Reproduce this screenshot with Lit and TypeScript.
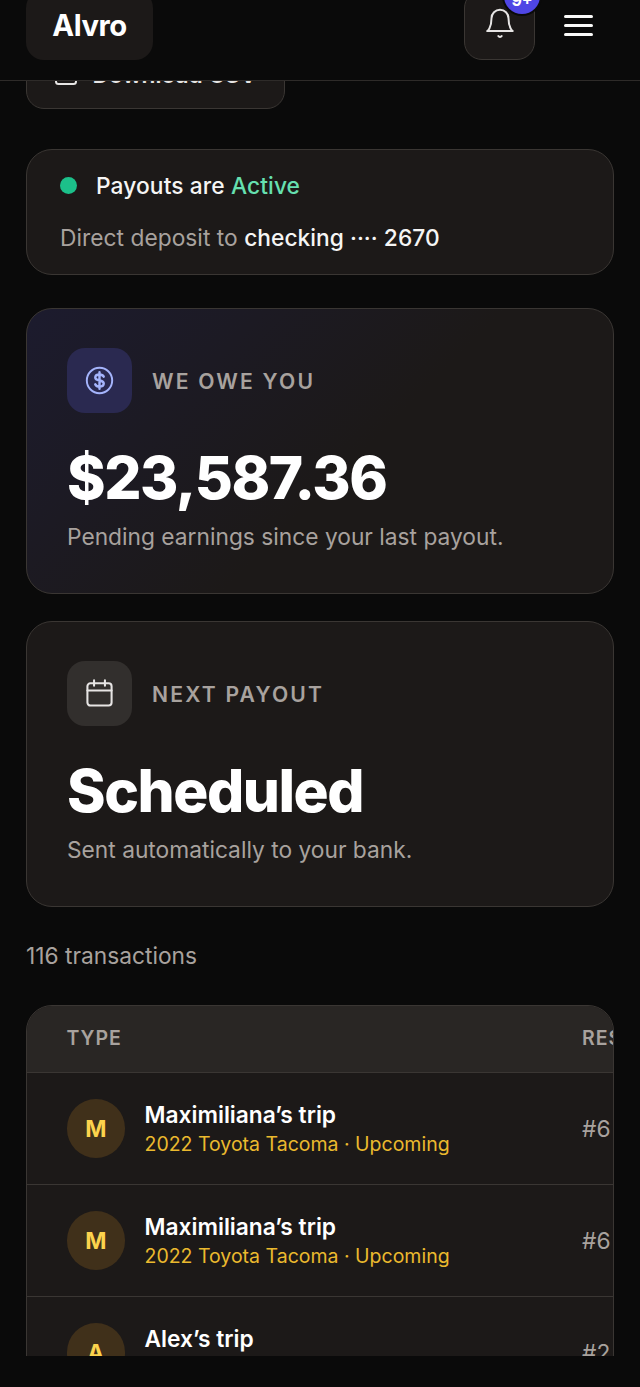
import { LitElement, html, css } from "lit";
import { customElement } from "lit/decorators.js";

interface Row {
  initial: string;
  name: string;
  sub: string;
  res: string;
}

const rows: Row[] = [
  { initial: "M", name: "Maximiliana’s trip", sub: "2022 Toyota Tacoma · Upcoming", res: "#6" },
  { initial: "M", name: "Maximiliana’s trip", sub: "2022 Toyota Tacoma · Upcoming", res: "#6" },
  { initial: "A", name: "Alex’s trip", sub: "2022 Toyota Tacoma · Upcoming", res: "#2" },
];

@customElement("app-root")
export class AppRoot extends LitElement {
  static styles = css`
    :host {
      display: block;
      width: 640px;
      height: 1387px;
      overflow: hidden;
      background: #0a0a0a;
      font-family: Inter, "Liberation Sans", sans-serif;
      color: #fafaf9;
    }
    * {
      box-sizing: border-box;
    }
    .header {
      display: flex;
      align-items: flex-start;
      justify-content: space-between;
      height: 91px;
      margin-top: -10px;
      padding: 0 47px 0 26px;
      border-bottom: 1px solid #2e2b29;
    }
    .logo {
      display: flex;
      align-items: center;
      justify-content: center;
      width: 127px;
      height: 70px;
      border-radius: 18px;
      background: #1c1918;
      font-size: 29.25px;
      font-weight: 700;
      letter-spacing: -0.45px;
      color: #fff;
    }
    .actions {
      display: flex;
      align-items: flex-start;
      gap: 29px;
    }
    .bell {
      position: relative;
      display: flex;
      align-items: center;
      justify-content: center;
      width: 71px;
      height: 70px;
      border-radius: 18px;
      border: 1.5px solid #3a3633;
      background: #1c1918;
      color: #e7e5e4;
    }
    .bell svg {
      display: block;
      width: 34px;
      height: 34px;
      margin-top: -2px;
    }
    .badge {
      position: absolute;
      top: -13px;
      left: 39px;
      display: flex;
      align-items: center;
      justify-content: center;
      width: 36px;
      height: 36px;
      padding-top: 8px;
      border-radius: 50%;
      background: #4f46e5;
      box-shadow: 0 0 0 2px #0a0a0a;
      font-size: 16px;
      font-weight: 700;
      color: #fff;
    }
    .menu {
      display: flex;
      flex-direction: column;
      gap: 6px;
      width: 29px;
      margin-top: 25px;
    }
    .menu span {
      display: block;
      height: 3px;
      border-radius: 2px;
      background: #fafaf9;
    }
    .scroller {
      height: 1275px;
      overflow: hidden;
    }
    .content {
      display: flex;
      flex-direction: column;
      margin-top: -38px;
      padding: 0 26.5px 0 26px;
    }
    .download {
      display: flex;
      align-items: center;
      gap: 14.5px;
      width: 259px;
      height: 66px;
      padding: 0 0 3px 27px;
      border: 1.5px solid #3a3633;
      border-radius: 18px;
      background: #1c1918;
      font-size: 22.75px;
      font-weight: 600;
      color: #e7e5e4;
    }
    .download svg {
      width: 24px;
      height: 24px;
      flex: none;
    }
    .card {
      border: 1.5px solid #3a3633;
      border-radius: 26px;
      background: #1c1918;
    }
    .status {
      margin-top: 40px;
      height: 126px;
      padding: 18px 33px 0;
    }
    .status-line {
      display: flex;
      align-items: center;
      gap: 19px;
      height: 34px;
      font-size: 22.75px;
      font-weight: 500;
      letter-spacing: 0.1px;
      color: #f5f5f4;
    }
    .dot {
      width: 17px;
      height: 17px;
      border-radius: 50%;
      background: #1cc08a;
    }
    .active {
      color: #66e0b0;
    }
    .deposit {
      margin-top: 19px;
      font-size: 22.75px;
      line-height: 34px;
      letter-spacing: 0.03px;
      color: #a8a29e;
    }
    .deposit b {
      font-weight: 500;
      color: #f5f5f4;
    }
    .stat {
      height: 286px;
      padding: 39px 40px 0;
    }
    .owe {
      margin-top: 33px;
      background: linear-gradient(135deg, #1c1b2e 0%, #1c1918 55%);
    }
    .next {
      margin-top: 27px;
    }
    .stat-head {
      display: flex;
      align-items: center;
      gap: 20px;
    }
    .icon-box {
      display: flex;
      align-items: center;
      justify-content: center;
      width: 65px;
      height: 65px;
      border-radius: 18px;
      background: #2a2950;
      color: #a5b4fc;
    }
    .next .icon-box {
      background: #322f2d;
      color: #e7e5e4;
    }
    .icon-box svg {
      width: 29px;
      height: 29px;
    }
    .label {
      font-size: 21.125px;
      font-weight: 600;
      letter-spacing: 2.2px;
      color: #a8a29e;
      padding-top: 1px;
    }
    .value {
      margin-top: 29px;
      font-size: 58.5px;
      line-height: 72px;
      font-weight: 800;
      letter-spacing: -1.46px;
      color: #fff;
    }
    .hint {
      margin-top: 6px;
      font-size: 22.75px;
      line-height: 34px;
      color: #a8a29e;
    }
    .count {
      margin-top: 32px;
      font-size: 22.75px;
      line-height: 34px;
      color: #a8a29e;
    }
    .table {
      margin-top: 32px;
      overflow: hidden;
      border: 1.5px solid #3a3633;
      border-radius: 26px;
      background: #1c1918;
    }
    .thead,
    .row {
      display: grid;
      grid-template-columns: 515.5px 200px;
      align-items: center;
      padding-left: 39.5px;
    }
    .thead {
      height: 67px;
      padding-bottom: 2px;
      background: #292624;
      border-bottom: 1.5px solid #3a3633;
      font-size: 19.5px;
      font-weight: 600;
      letter-spacing: 1px;
      color: #a8a29e;
    }
    .row {
      height: 112px;
      border-bottom: 1.5px solid #3a3633;
    }
    .trip {
      display: flex;
      align-items: center;
      gap: 19.5px;
    }
    .avatar {
      display: flex;
      align-items: center;
      justify-content: center;
      flex: none;
      width: 58.5px;
      height: 58.5px;
      border-radius: 50%;
      background: #40301a;
      font-size: 22.75px;
      font-weight: 700;
      color: #fcd34d;
    }
    .name {
      font-size: 22.75px;
      line-height: 30px;
      font-weight: 600;
      color: #fff;
      white-space: nowrap;
    }
    .sub {
      font-size: 19.5px;
      line-height: 28px;
      color: #ebb92e;
      white-space: nowrap;
    }
    .res {
      font-size: 22.75px;
      color: #a8a29e;
    }
  `;

  render() {
    return html`
      <div class="header">
        <div class="logo">Alvro</div>
        <div class="actions">
          <div class="bell">
            <svg viewBox="0 0 24 24" fill="none" stroke="currentColor" stroke-width="1.4" stroke-linecap="round" stroke-linejoin="round">
              <path d="M18 8A6 6 0 0 0 6 8c0 7-3 9-3 9h18s-3-2-3-9" />
              <path d="M13.2 20.500a1.400 1.400 0 0 1-2.400 0" />
            </svg>
            <span class="badge">9+</span>
          </div>
          <div class="menu"><span></span><span></span><span></span></div>
        </div>
      </div>
      <div class="scroller">
        <div class="content">
          <div class="download">
            <svg viewBox="0 0 24 24" fill="none" stroke="currentColor" stroke-width="2" stroke-linecap="round" stroke-linejoin="round">
              <rect x="2" y="3" width="20" height="18" rx="2.5" />
            </svg>
            Download CSV
          </div>
          <div class="card status">
            <div class="status-line">
              <span class="dot"></span>
              <span>Payouts are <span class="active">Active</span></span>
            </div>
            <div class="deposit">Direct deposit to <b>checking ···· 2670</b></div>
          </div>
          <div class="card stat owe">
            <div class="stat-head">
              <div class="icon-box">
                <svg viewBox="0 0 24 24" fill="none" stroke="currentColor" stroke-width="1.6" stroke-linecap="round" stroke-linejoin="round">
                  <circle cx="12" cy="12" r="10.5" />
                  <path stroke-width="2" d="M15.5 8.8c-.5-1-1.8-1.8-3.5-1.8-2 0-3.5 1-3.5 2.5s1.3 2.100 3.500 2.500 3.500 1 3.500 2.500-1.500 2.500-3.500 2.500c-1.700 0-3-.8-3.500-1.800M12 5.200v13.600" />
                </svg>
              </div>
              <span class="label">WE OWE YOU</span>
            </div>
            <div class="value">$23,587.36</div>
            <div class="hint">Pending earnings since your last payout.</div>
          </div>
          <div class="card stat next">
            <div class="stat-head">
              <div class="icon-box">
                <svg viewBox="0 0 24 24" fill="none" stroke="currentColor" stroke-width="1.7" stroke-linecap="round" stroke-linejoin="round">
                  <rect x="2" y="3.500" width="20" height="18.500" rx="2.500" />
                  <path d="M2 9.500h20M7.500 1v4.500M16.500 1v4.500" />
                </svg>
              </div>
              <span class="label">NEXT PAYOUT</span>
            </div>
            <div class="value">Scheduled</div>
            <div class="hint">Sent automatically to your bank.</div>
          </div>
          <div class="count">116 transactions</div>
          <div class="table">
            <div class="thead"><span>TYPE</span><span>RESERVATION</span></div>
            ${rows.map(
              (r) => html`
                <div class="row">
                  <div class="trip">
                    <div class="avatar">${r.initial}</div>
                    <div>
                      <div class="name">${r.name}</div>
                      <div class="sub">${r.sub}</div>
                    </div>
                  </div>
                  <div class="res">${r.res}</div>
                </div>
              `
            )}
          </div>
        </div>
      </div>
    `;
  }
}
